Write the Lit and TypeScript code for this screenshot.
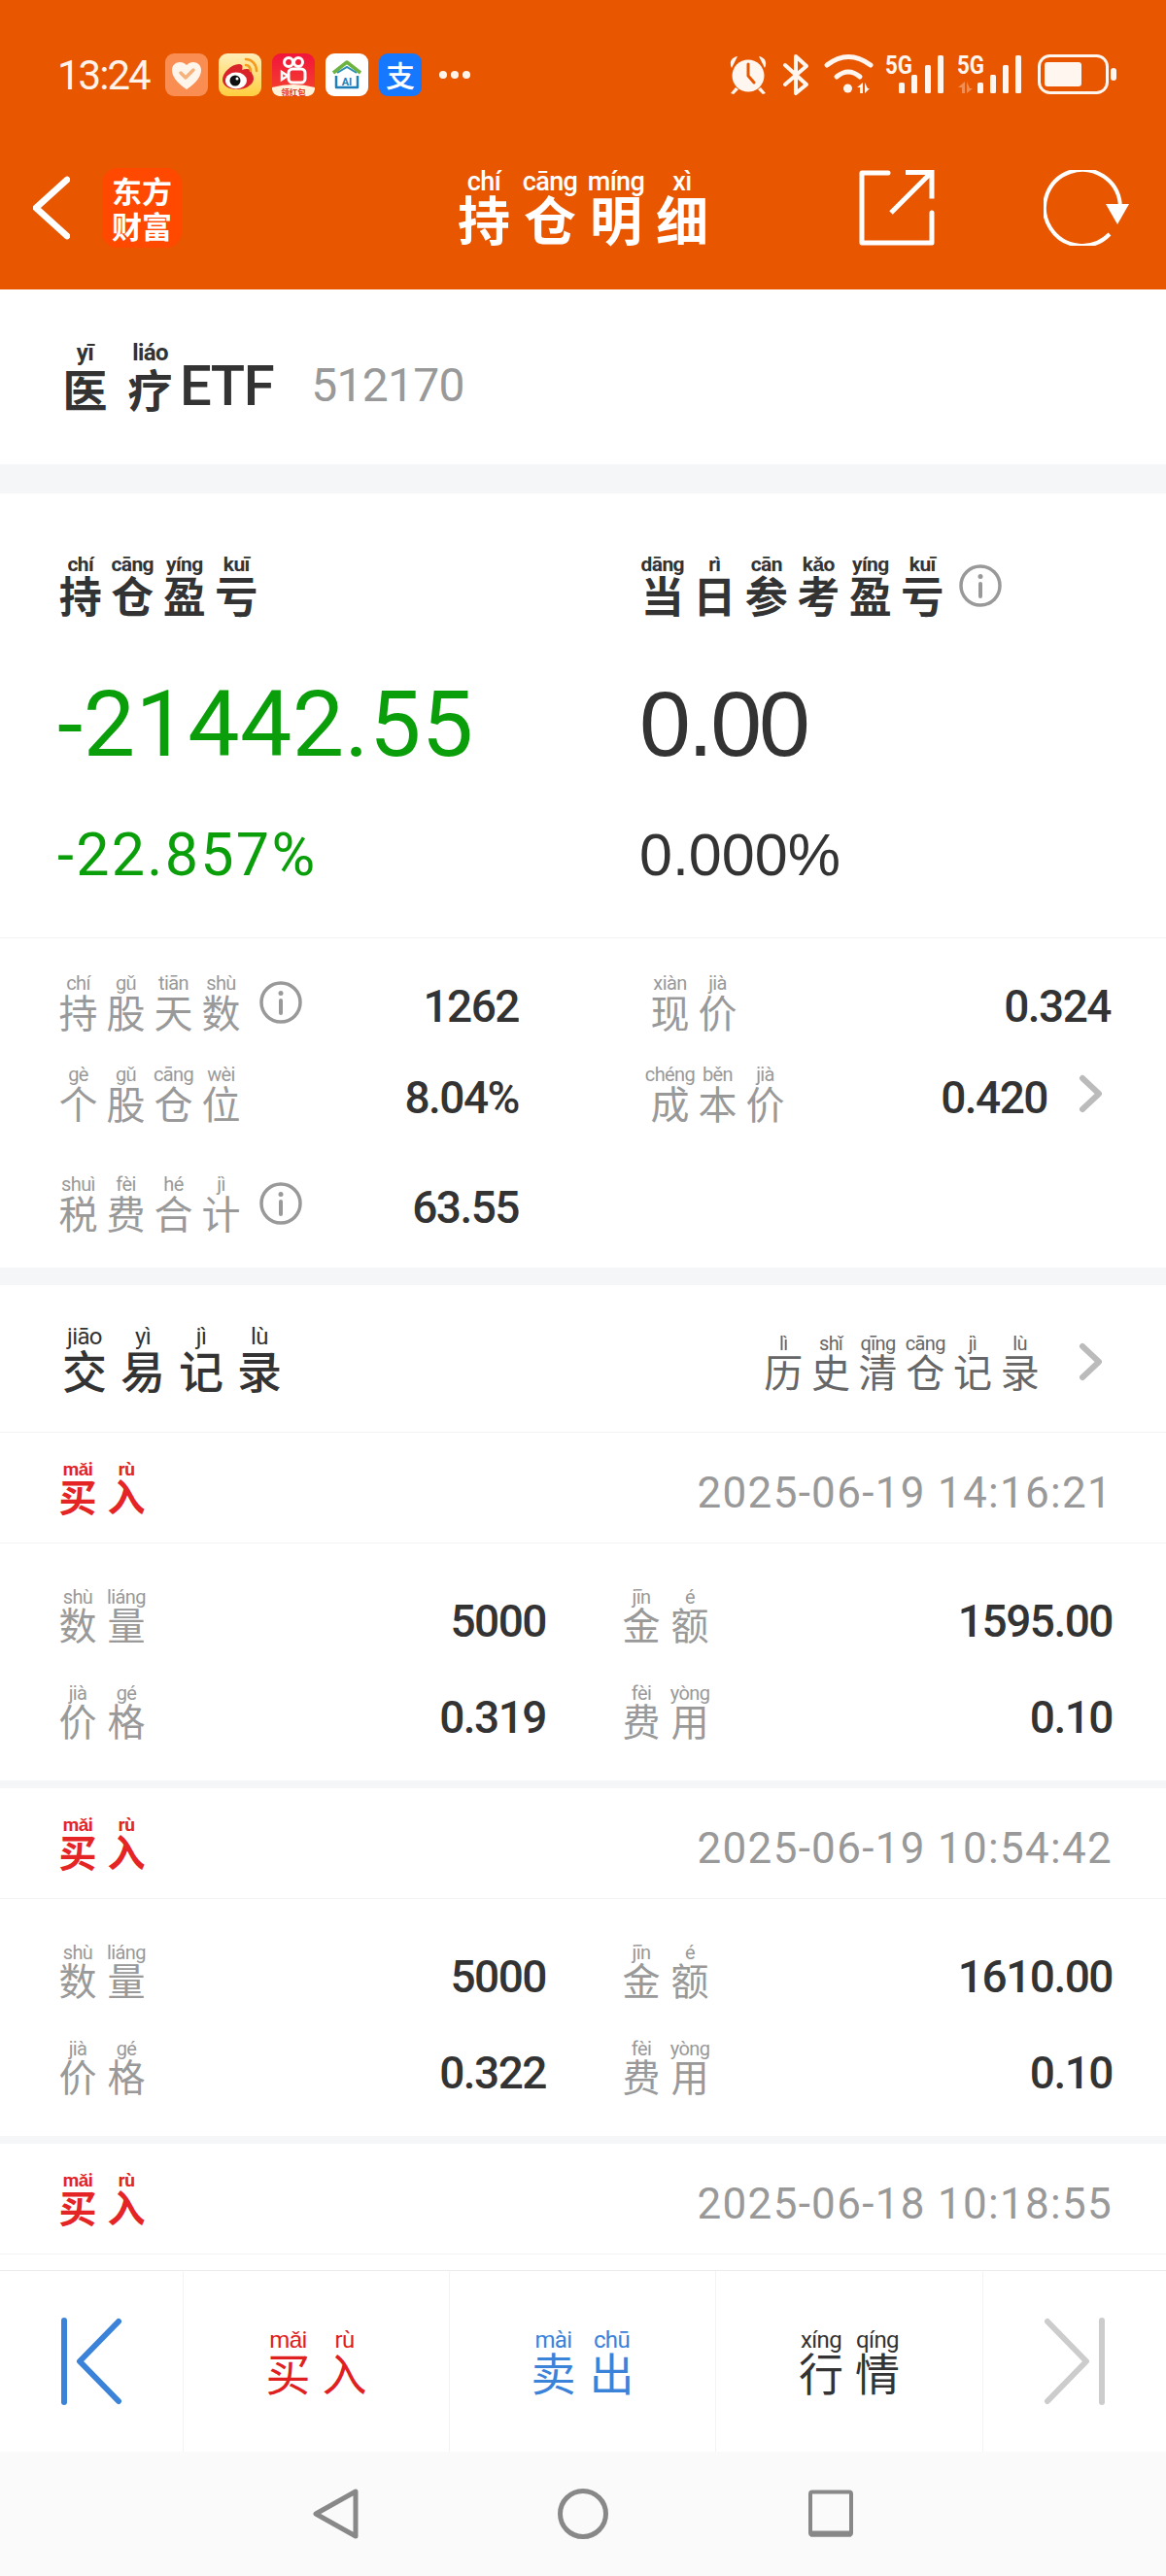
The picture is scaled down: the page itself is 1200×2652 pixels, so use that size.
import { LitElement, html, css, svg } from "lit";
import { customElement } from "lit/decorators.js";

// characters + pinyin, one cell per character
const py = (chars: string, pinyin: string, cls: string) => {
  const sounds = pinyin.split(" ");
  return html`<span class="py ${cls}">${[...chars].map(
    (c, i) => html`<span class="z"><span class="rt">${sounds[i]}</span><span class="zh">${c}</span></span>`
  )}</span>`;
};

const info = html`<svg class="info" width="44" height="44" viewBox="0 0 44 44" fill="none" stroke="#999">
  <circle cx="22" cy="22" r="20" stroke-width="3.5" />
  <path d="M22 20v13" stroke-width="4" stroke-linecap="round" />
  <circle cx="22" cy="12.5" r="2.5" fill="#999" stroke="none" />
</svg>`;

const chevron = html`<svg class="chev" width="24" height="40" viewBox="0 0 24 40" fill="none" stroke="#bbb" stroke-width="6" stroke-linecap="round" stroke-linejoin="round">
  <path d="M4 4l17 16L4 36" />
</svg>`;

const appIcons = [
  svg`<rect width="44" height="44" rx="9" fill="#f98d52"/>
    <path d="M22 37C12 30 7 24 7 17c0-5 4-8 8-8 3 0 5 1 7 3 2-2 4-3 7-3 4 0 8 3 8 8 0 7-5 13-15 20z" fill="#fff5ea"/>
    <path d="M16 20l5 5 8-8" fill="none" stroke="#f6b27c" stroke-width="3.5" stroke-linecap="round" stroke-linejoin="round"/>`,
  svg`<defs><linearGradient id="wb" x1="0" y1="0" x2="0" y2="1"><stop offset="0" stop-color="#ffeeb8"/><stop offset="1" stop-color="#ffcf3f"/></linearGradient></defs>
    <rect width="44" height="44" rx="9" fill="url(#wb)"/>
    <path d="M4 27c0-7 9-16 17-16 4 0 4 3 3 6 5-2 10-1 10 3 0 1 2 2 2 6 0 6-8 11-17 11S4 33 4 27z" fill="#d9232a"/>
    <ellipse cx="18" cy="28" rx="11" ry="8.5" fill="#fff"/>
    <circle cx="17" cy="28" r="5.5" fill="#111"/><circle cx="19" cy="26" r="1.5" fill="#fff"/>
    <path d="M28 6c6 0 11 5 11 12M28 12c3 0 5 3 5 6" fill="none" stroke="#f39a1f" stroke-width="2.5" stroke-linecap="round"/>`,
  svg`<defs><linearGradient id="ks" x1="0" y1="0" x2="0" y2="1"><stop offset="0" stop-color="#f2143c"/><stop offset="1" stop-color="#f4462c"/></linearGradient></defs>
    <rect width="44" height="44" rx="9" fill="url(#ks)"/>
    <circle cx="17" cy="9" r="4.5" fill="none" stroke="#fff" stroke-width="3"/><circle cx="27" cy="9" r="4.5" fill="none" stroke="#fff" stroke-width="3"/>
    <rect x="17" y="16" width="17" height="14" rx="4" fill="none" stroke="#fff" stroke-width="3"/><path d="M16 23l-6-4v8z" fill="none" stroke="#fff" stroke-width="2.5"/>
    <path d="M0 35q22-6 44 0v2a9 9 0 0 1-7 7H7a9 9 0 0 1-7-7z" fill="#fff3dc"/>
    <text x="22" y="43" text-anchor="middle" font-size="8.5" font-weight="700" fill="#e5342c" font-family="Noto Sans CJK SC">领红包</text>`,
  svg`<rect width="44" height="44" rx="9" fill="#fff"/>
    <path d="M8 20L22 9l14 11" fill="none" stroke="#6cb33f" stroke-width="3.5" stroke-linejoin="round"/>
    <path d="M11 23v12h22V23" fill="none" stroke="#1f7fb8" stroke-width="2.5" stroke-linejoin="round"/>
    <path d="M12 20l10-6 10 6" fill="none" stroke="#2d8fb5" stroke-width="2"/>
    <text x="22" y="33" text-anchor="middle" font-size="11" font-weight="700" fill="#1f7fb8" font-family="Roboto">AI</text>`,
  svg`<rect width="44" height="44" rx="9" fill="#1677ff"/>
    <text x="22" y="34" text-anchor="middle" font-size="30" font-weight="500" fill="#fff" font-family="Noto Sans CJK SC">支</text>`,
];

const statusRight = html`<svg class="sys" width="398" height="44" viewBox="751 55 398 44">
  <g fill="#fff6f0">
    <circle cx="770" cy="78" r="16.5" />
    <path d="M753 70c-3-6 0-11 6-12zM787 70c3-6 0-11-6-12z" />
    <path d="M757 90l-5 6 3 1 5-5zM783 90l5 6-3 1-5-5z" />
    <text x="911" y="76" font-family="Roboto" font-weight="700" font-size="25" textLength="28" lengthAdjust="spacingAndGlyphs">5G</text>
    <text x="985" y="76" font-family="Roboto" font-weight="700" font-size="25" textLength="28" lengthAdjust="spacingAndGlyphs">5G</text>
    <rect x="925" y="85" width="6" height="11" rx="1.5" /><rect x="938" y="77" width="6" height="19" rx="1.5" />
    <rect x="952" y="67" width="6" height="29" rx="1.5" /><rect x="965" y="57" width="6" height="39" rx="1.5" />
    <rect x="1006" y="85" width="6" height="11" rx="1.5" /><rect x="1019" y="77" width="6" height="19" rx="1.5" />
    <rect x="1032" y="67" width="6" height="29" rx="1.5" /><rect x="1045" y="57" width="6" height="39" rx="1.5" />
    <circle cx="872.5" cy="91" r="4.5" />
    <path d="M888 85v11h-3v-6h-3zM890 85v11l5-5h-2z" />
    <path d="M993 84v12h-3v-6h-4zM995 84v12l6-5h-3z" opacity=".35" />
    <rect x="1075" y="64" width="38" height="25" rx="3" />
    <rect x="1143" y="70" width="6" height="13" rx="3" />
  </g>
  <path d="M770 66v12l6 7" fill="none" stroke="#e85600" stroke-width="3" stroke-linecap="round" stroke-linejoin="round" />
  <g fill="none" stroke="#fff6f0" stroke-linecap="round" stroke-linejoin="round">
    <path d="M808 67l22 20-11 9V58l11 10-22 19" stroke-width="4" />
    <path d="M851 67q22-17 45 0" stroke-width="5" />
    <path d="M861 79q12-10 24 0" stroke-width="5" />
    <rect x="1069.500" y="57.500" width="70" height="38" rx="11" stroke-width="3" />
  </g>
</svg>`;

const records = [
  { date: "2025-06-19 14:16:21", qty: "5000", amount: "1595.00", price: "0.319", fee: "0.10" },
  { date: "2025-06-19 10:54:42", qty: "5000", amount: "1610.00", price: "0.322", fee: "0.10" },
  { date: "2025-06-18 10:18:55" },
];

@customElement("app-root")
export class AppRoot extends LitElement {
  static styles = css`
    :host {
      display: flex;
      flex-direction: column;
      width: 1200px;
      height: 2652px;
      background: #fff;
      color: #333;
      font-family: Roboto, "Noto Sans CJK SC", sans-serif;
      overflow: hidden;
    }
    svg {
      display: block;
      flex: none;
    }

    /* pinyin labels */
    .py {
      display: inline-flex;
      flex: none;
      color: var(--c, #999);
    }
    .z {
      display: flex;
      flex-direction: column;
      align-items: center;
      width: var(--w);
    }
    .rt {
      font-family: Roboto, sans-serif;
      font-size: var(--rs);
      line-height: var(--rh);
      height: var(--rh);
      font-weight: var(--wr, 400);
      letter-spacing: -0.6px;
      white-space: nowrap;
    }
    .zh {
      font-family: "Noto Sans CJK SC", sans-serif;
      font-size: var(--zs);
      line-height: var(--zh);
      height: var(--zh);
      font-weight: var(--wz, 400);
    }
    .p-title { --w: 68px; --rs: 27px; --rh: 21px; --zs: 54px; --zh: 54px; --c: #fff; --wz: 700; --wr: 500; }
    .p-name { --w: 67px; --rs: 24px; --rh: 22px; --zs: 46px; --zh: 50px; --c: #333; --wz: 700; --wr: 700; }
    .p-hero { --w: 53.5px; --rs: 21px; --rh: 18px; --zs: 44px; --zh: 44px; --c: #333; --wz: 700; --wr: 700; }
    .p-stat { --w: 49px; --rs: 20px; --rh: 18px; --zs: 40px; --zh: 40px; }
    .p-sec { --w: 60px; --rs: 24px; --rh: 20px; --zs: 46px; --zh: 46px; --c: #333; --wz: 500; }
    .p-hist { --w: 48.700px; --rs: 20px; --rh: 18px; --zs: 40px; --zh: 38px; --c: #666; }
    .p-buy { --w: 50px; --rs: 19px; --rh: 14px; --zs: 39px; --zh: 38px; --c: #e52525; --wz: 700; --wr: 700; }
    .p-row { --w: 50px; --rs: 20px; --rh: 16px; --zs: 39px; --zh: 38px; }
    .p-bar { --w: 58px; --rs: 24px; --rh: 20px; --zs: 46px; --zh: 44px; }
    .p-bar.red { --c: #e02020; }
    .p-bar.blue { --c: #3b82d9; --w: 60px; }
    .p-bar.dark { --c: #333; --w: 58px; }

    /* header */
    .top {
      flex: none;
      height: 298px;
      background: #e85600;
      color: #fff;
    }
    .status {
      display: flex;
      align-items: center;
      height: 44px;
      padding: 55px 51px 0 59px;
    }
    .time {
      width: 111px;
      font-size: 42px;
      letter-spacing: -2px;
      color: #fff3ea;
    }
    .apps {
      display: flex;
      gap: 11px;
    }
    .more {
      display: flex;
      gap: 4px;
      margin-left: 18px;
    }
    .more i {
      width: 8px;
      height: 8px;
      border-radius: 50%;
      background: #fff3ea;
    }
    .sys {
      margin-left: auto;
      overflow: visible;
    }
    .nav {
      display: grid;
      grid-template-columns: 1fr auto 1fr;
      align-items: center;
      height: 82px;
      margin-top: 74px;
      padding: 0 34px;
    }
    .nav-left {
      display: flex;
      align-items: center;
      gap: 33px;
    }
    .logo {
      width: 82px;
      height: 82px;
      border-radius: 16px;
      background: #ff4800;
      font-family: "Noto Sans CJK SC", sans-serif;
      font-size: 31px;
      font-weight: 700;
      line-height: 36px;
      text-align: center;
      padding-top: 5px;
      box-sizing: border-box;
    }
    .nav-right {
      display: flex;
      justify-content: flex-end;
      gap: 112px;
      margin-right: 4px;
    }

    /* scroll area */
    .content {
      flex: 1;
      min-height: 0;
      overflow: hidden;
    }
    .gap {
      height: 30px;
      background: #f5f6f8;
    }
    .gap.thin {
      height: 18px;
    }
    .gap.rec {
      height: 8px;
    }
    .name {
      display: flex;
      align-items: flex-start;
      height: 126px;
      padding: 54px 0 0 54px;
    }
    .etf {
      font-size: 58px;
      line-height: 58px;
      font-weight: 500;
      margin: 16px 0 0 -3px;
      letter-spacing: -1.500px;
    }
    .code {
      font-size: 48px;
      line-height: 48px;
      color: #999;
      margin: 21px 0 0 39px;
      letter-spacing: -0.700px;
    }

    .hero {
      display: grid;
      grid-template-columns: 599px 1fr;
      padding: 64px 0 54px 56px;
      border-bottom: 1px solid #f3f3f3;
    }
    .hero-head {
      display: flex;
      align-items: center;
      height: 62px;
      gap: 11px;
    }
    .big {
      font-size: 95px;
      line-height: 95px;
      margin: 64px 0 0 3px;
    }
    .pct {
      font-size: 61px;
      line-height: 61px;
      margin: 57px 0 0 3px;
    }
    .down {
      color: #0b9e0b;
      letter-spacing: 0.4px;
    }
    .pct.down {
      letter-spacing: 2.3px;
    }
    .flat {
      color: #333;
      font-family: "Liberation Sans", sans-serif;
      letter-spacing: -3px;
    }
    .pct.flat {
      letter-spacing: 0;
    }

    .stats {
      display: grid;
      grid-template-columns: 478px 478px;
      grid-template-rows: 94px 113px 58px;
      column-gap: 131px;
      align-items: start;
      padding: 37px 0 37px 56px;
    }
    .stat {
      display: flex;
      align-items: center;
    }
    .stat .info {
      margin-left: 15px;
    }
    .val {
      margin: 8px 0 0 auto;
      font-size: 46px;
      line-height: 46px;
      font-weight: 500;
      letter-spacing: -1.500px;
    }
    .stat .chev {
      margin: 0 9px 0 32px;
    }

    .sec-head {
      display: flex;
      align-items: center;
      justify-content: space-between;
      height: 151px;
      padding: 0 66px 0 57px;
      border-bottom: 1px solid #f3f3f3;
    }
    .hist {
      display: flex;
      align-items: center;
      gap: 36px;
      margin-top: 6px;
    }
    .rec-head {
      display: flex;
      align-items: center;
      justify-content: space-between;
      height: 113px;
      padding: 0 55px;
      border-bottom: 1px solid #f3f3f3;
    }
    .date {
      font-size: 44px;
      letter-spacing: 1.300px;
      color: #999;
      margin-top: 10px;
    }
    .rec-body {
      display: grid;
      grid-template-columns: 507px 510px;
      grid-template-rows: 99px 54px;
      column-gap: 73px;
      align-items: start;
      padding: 45px 0 46px 55px;
    }
    .rec-body .val {
      margin-top: 12px;
    }

    /* bottom toolbar */
    .bar {
      flex: none;
      display: grid;
      grid-template-columns: 188px 274px 274px 275px 189px;
      height: 186px;
      border-top: 1px solid #ececec;
    }
    .bar-cell {
      display: flex;
      align-items: center;
      justify-content: center;
      border-left: 1px solid #f3f3f3;
    }
    .bar-cell:first-child {
      border-left: 0;
    }
    .sysnav {
      flex: none;
      display: flex;
      justify-content: center;
      gap: 203px;
      height: 128px;
      padding-top: 38px;
      box-sizing: border-box;
      background: #fafafa;
    }
  `;

  renderStat(label: unknown, value: string, withInfo = false, withChev = false) {
    return html`<div class="stat">
      ${label}${withInfo ? info : ""}
      <span class="val">${value}</span>
      ${withChev ? chevron : ""}
    </div>`;
  }

  renderRecord(r: (typeof records)[number], i: number) {
    return html`
      ${i > 0 ? html`<div class="gap rec"></div>` : ""}
      <div class="rec-head">
        ${py("买入", "mǎi rù", "p-buy")}
        <span class="date">${r.date}</span>
      </div>
      ${r.qty
        ? html`<div class="rec-body">
            ${this.renderStat(py("数量", "shù liáng", "p-row"), r.qty)}
            ${this.renderStat(py("金额", "jīn é", "p-row"), r.amount!)}
            ${this.renderStat(py("价格", "jià gé", "p-row"), r.price!)}
            ${this.renderStat(py("费用", "fèi yòng", "p-row"), r.fee!)}
          </div>`
        : ""}
    `;
  }

  render() {
    return html`
      <header class="top">
        <div class="status">
          <span class="time">13:24</span>
          <div class="apps">
            ${appIcons.map((a) => html`<svg width="44" height="44" viewBox="0 0 44 44">${a}</svg>`)}
          </div>
          <div class="more"><i></i><i></i><i></i></div>
          ${statusRight}
        </div>
        <div class="nav">
          <div class="nav-left">
            <svg width="38" height="66" viewBox="0 0 38 66" fill="none" stroke="#fff" stroke-width="6.500" stroke-linecap="round" stroke-linejoin="round">
              <path d="M35 4L3 33l32 29" />
            </svg>
            <div class="logo">东方<br />财富</div>
          </div>
          ${py("持仓明细", "chí cāng míng xì", "p-title")}
          <div class="nav-right">
            <svg width="78" height="78" viewBox="884 175 78 78" fill="none" stroke="#fff" stroke-width="5" stroke-linecap="round">
              <path d="M914 178h-27v72h72v-31" stroke-linejoin="round" />
              <path d="M917 219l41-41M932 177.500h27v27" stroke-linecap="butt" />
            </svg>
            <svg width="88" height="78" viewBox="1074 175 88 78" fill="none" stroke="#fff" stroke-width="4">
              <path d="M1152.800 210A39 39 0 1 0 1142 241" />
              <path d="M1138 210h24l-12 21z" fill="#fff" stroke="none" />
            </svg>
          </div>
        </div>
      </header>

      <main class="content">
        <div class="name">
          ${py("医疗", "yī liáo", "p-name")}
          <span class="etf">ETF</span>
          <span class="code">512170</span>
        </div>
        <div class="gap"></div>

        <section class="hero">
          <div>
            <div class="hero-head">${py("持仓盈亏", "chí cāng yíng kuī", "p-hero")}</div>
            <div class="big down">-21442.55</div>
            <div class="pct down">-22.857%</div>
          </div>
          <div>
            <div class="hero-head">${py("当日参考盈亏", "dāng rì cān kǎo yíng kuī", "p-hero")}${info}</div>
            <div class="big flat">0.00</div>
            <div class="pct flat">0.000%</div>
          </div>
        </section>

        <section class="stats">
          ${this.renderStat(py("持股天数", "chí gǔ tiān shù", "p-stat"), "1262", true)}
          ${this.renderStat(py("现价", "xiàn jià", "p-stat"), "0.324")}
          ${this.renderStat(py("个股仓位", "gè gǔ cāng wèi", "p-stat"), "8.04%")}
          ${this.renderStat(py("成本价", "chéng běn jià", "p-stat"), "0.420", false, true)}
          ${this.renderStat(py("税费合计", "shuì fèi hé jì", "p-stat"), "63.55", true)}
        </section>
        <div class="gap thin"></div>

        <div class="sec-head">
          ${py("交易记录", "jiāo yì jì lù", "p-sec")}
          <div class="hist">${py("历史清仓记录", "lì shǐ qīng cāng jì lù", "p-hist")}${chevron}</div>
        </div>
        ${records.map((r, i) => this.renderRecord(r, i))}
      </main>

      <div class="bar">
        <div class="bar-cell">
          <svg width="64" height="90" viewBox="0 0 64 90" fill="none" stroke="#3b82d9" stroke-width="6" stroke-linecap="round" stroke-linejoin="round">
            <path d="M4 3v84M60 4L20 45l40 41" />
          </svg>
        </div>
        <div class="bar-cell">${py("买入", "mǎi rù", "p-bar red")}</div>
        <div class="bar-cell">${py("卖出", "mài chū", "p-bar blue")}</div>
        <div class="bar-cell">${py("行情", "xíng qíng", "p-bar dark")}</div>
        <div class="bar-cell">
          <svg width="64" height="90" viewBox="0 0 64 90" fill="none" stroke="#ccc" stroke-width="6" stroke-linecap="round" stroke-linejoin="round">
            <path d="M60 3v84M4 4l40 41L4 86" />
          </svg>
        </div>
      </div>

      <nav class="sysnav">
        <svg width="52" height="52" viewBox="0 0 52 52" fill="none" stroke="#888" stroke-width="5" stroke-linejoin="round">
          <path d="M47 3v46L6 26z" />
        </svg>
        <svg width="52" height="52" viewBox="0 0 52 52" fill="none" stroke="#888" stroke-width="5">
          <circle cx="26" cy="26" r="23.500" />
        </svg>
        <svg width="52" height="52" viewBox="0 0 52 52" fill="none" stroke="#888" stroke-linejoin="round">
          <rect x="5" y="3.500" width="42" height="44" rx="2" stroke-width="4" />
          <path d="M5 46.500h42" stroke-width="6" />
        </svg>
      </nav>
    `;
  }
}
